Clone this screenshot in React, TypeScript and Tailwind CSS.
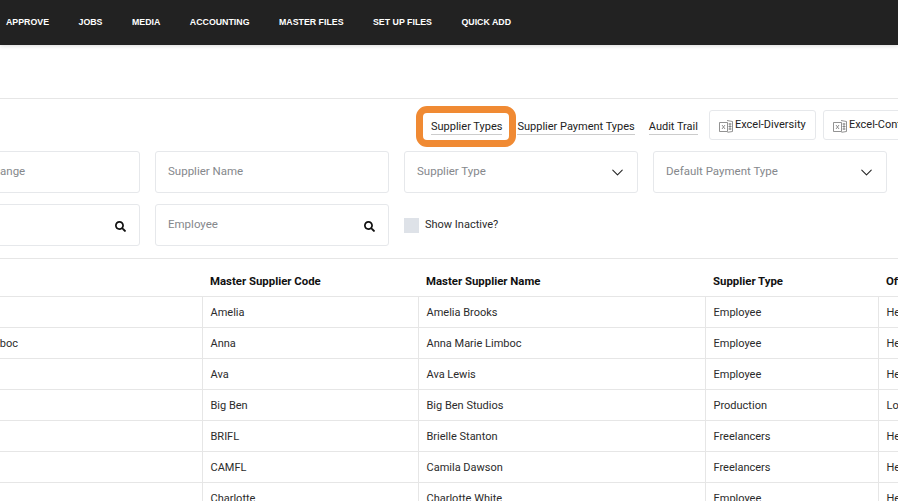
import { ChevronDown } from "lucide-react";
import { FaSearch } from "react-icons/fa";

const navItems = ["Approve", "Jobs", "Media", "Accounting", "Master Files", "Set Up Files", "Quick Add"];

const rows = [
  ["Amelia Brooks", "Amelia", "Amelia Brooks", "Employee", "Head Office"],
  ["Anna Marie Limboc", "Anna", "Anna Marie Limboc", "Employee", "Head Office"],
  ["Ava Lewis", "Ava", "Ava Lewis", "Employee", "Head Office"],
  ["Big Ben Studios", "Big Ben", "Big Ben Studios", "Production", "London"],
  ["Brielle Stanton", "BRIFL", "Brielle Stanton", "Freelancers", "Head Office"],
  ["Camila Dawson", "CAMFL", "Camila Dawson", "Freelancers", "Head Office"],
  ["Charlotte White", "Charlotte", "Charlotte White", "Employee", "Head Office"],
];

function ExcelIcon() {
  return (
    <svg width="14" height="14" viewBox="0 0 14 14" fill="none" stroke="#777" strokeWidth="0.8" className="mt-[1px] shrink-0">
      <path d="M0.5 3.5h8v9h-8z" />
      <path d="M3 6l3 4M6 6l-3 4" />
      <path d="M8 1.5l5.5 1v10l-5 .8" />
      <path d="M9.5 5h3M9.5 7.5h3M9.5 10h3M11 4v7" />
    </svg>
  );
}

function Field({ label, icon }: { label?: string; icon?: "search" | "chevron" }) {
  return (
    <div className="flex h-[42px] items-center justify-between rounded-[3px] border border-[#e6e8eb] bg-white pl-[12px] pr-[13px] text-[11.5px] text-[#85888c]">
      <span className="whitespace-nowrap">{label}</span>
      {icon === "search" && <FaSearch className="mt-[2px] text-[11px] text-[#111]" />}
      {icon === "chevron" && <ChevronDown size={19} strokeWidth={1.3} className="mr-[-3px] text-[#222]" />}
    </div>
  );
}

export default function App() {
  return (
    <div className="relative h-[501px] w-[898px] overflow-hidden bg-white font-['Roboto',sans-serif] text-[#2b2b2b]">
      {/* Top nav */}
      <nav className="flex h-[45px] items-center gap-[29.5px] bg-[#222222] pl-[6px] font-['Liberation_Sans',sans-serif] text-[8.8px] font-bold uppercase text-white shadow-[0_1px_4px_rgba(0,0,0,0.15)]">
        {navItems.map((item) => (
          <span key={item}>{item}</span>
        ))}
      </nav>

      <div className="h-[54px] border-b border-[#e6e6e6]" />

      {/* Actions */}
      <div className="flex h-[52px] items-start whitespace-nowrap pl-[431px] pt-[11px] text-[11px] text-[#222]">
        <span className="mt-[10px] border-b border-[#ccc] leading-[14px]">Supplier Types</span>
        <span className="ml-[15px] mt-[10px] border-b border-[#ccc] leading-[14px]">Supplier Payment Types</span>
        <span className="ml-[14px] mt-[10px] border-b border-[#ccc] leading-[14px]">Audit Trail</span>
        <span className="ml-[11px] flex h-[30px] w-[107px] shrink-0 items-center gap-[2px] rounded-[3px] border border-[#e6e8eb] pl-[9px] pt-[1px]">
          <ExcelIcon />
          Excel-Diversity
        </span>
        <span className="ml-[7px] flex h-[30px] w-[107px] shrink-0 items-center gap-[2px] rounded-[3px] border border-[#e6e8eb] pl-[9px] pt-[1px]">
          <ExcelIcon />
          Excel-Contacts
        </span>
      </div>

      {/* Filters */}
      <div className="ml-[-94px] grid w-[981px] grid-cols-4 gap-x-[15px] gap-y-[11px]">
        <Field label="Effective Date Range" />
        <Field label="Supplier Name" />
        <Field label="Supplier Type" icon="chevron" />
        <Field label="Default Payment Type" icon="chevron" />
        <Field icon="search" />
        <Field label="Employee" icon="search" />
        <label className="flex h-[42px] items-center gap-[6px] text-[11px]">
          <span className="h-[15px] w-[15px] bg-[#dee2e8]" />
          Show Inactive?
        </label>
      </div>

      <div className="mt-[12px] border-b border-[#e6e6e6]" />

      {/* Table */}
      <table className="ml-[-94px] w-[1192px] table-fixed border-collapse text-left text-[11px]">
        <colgroup>
          <col className="w-[296px]" />
          <col className="w-[216px]" />
          <col className="w-[287px]" />
          <col className="w-[173px]" />
          <col className="w-[220px]" />
        </colgroup>
        <thead>
          <tr className="h-[37px] border-b border-[#e6e6e6] text-[11.4px] font-bold text-[#111]">
            <th className="pl-[8px] pt-[8px]">Name</th>
            <th className="pl-[8px] pt-[8px]">Master Supplier Code</th>
            <th className="pl-[8px] pt-[8px]">Master Supplier Name</th>
            <th className="pl-[8px] pt-[8px]">Supplier Type</th>
            <th className="pl-[8px] pt-[8px]">Office</th>
          </tr>
        </thead>
        <tbody>
          {rows.map((row) => (
            <tr key={row[0]} className="h-[31px] border-b border-[#e6e6e6]">
              <td className="whitespace-nowrap pl-[17px] pt-[3px]">{row[0]}</td>
              {row.slice(1).map((cell, i) => (
                <td key={i} className="border-l border-[#e6e6e6] pl-[8px] pt-[3px]">
                  {cell}
                </td>
              ))}
            </tr>
          ))}
        </tbody>
      </table>

      {/* Orange callout */}
      <div className="absolute left-[416px] top-[106px] h-[41px] w-[100px] rounded-[11px] border-[7px] border-[#f08a33]" />
    </div>
  );
}
